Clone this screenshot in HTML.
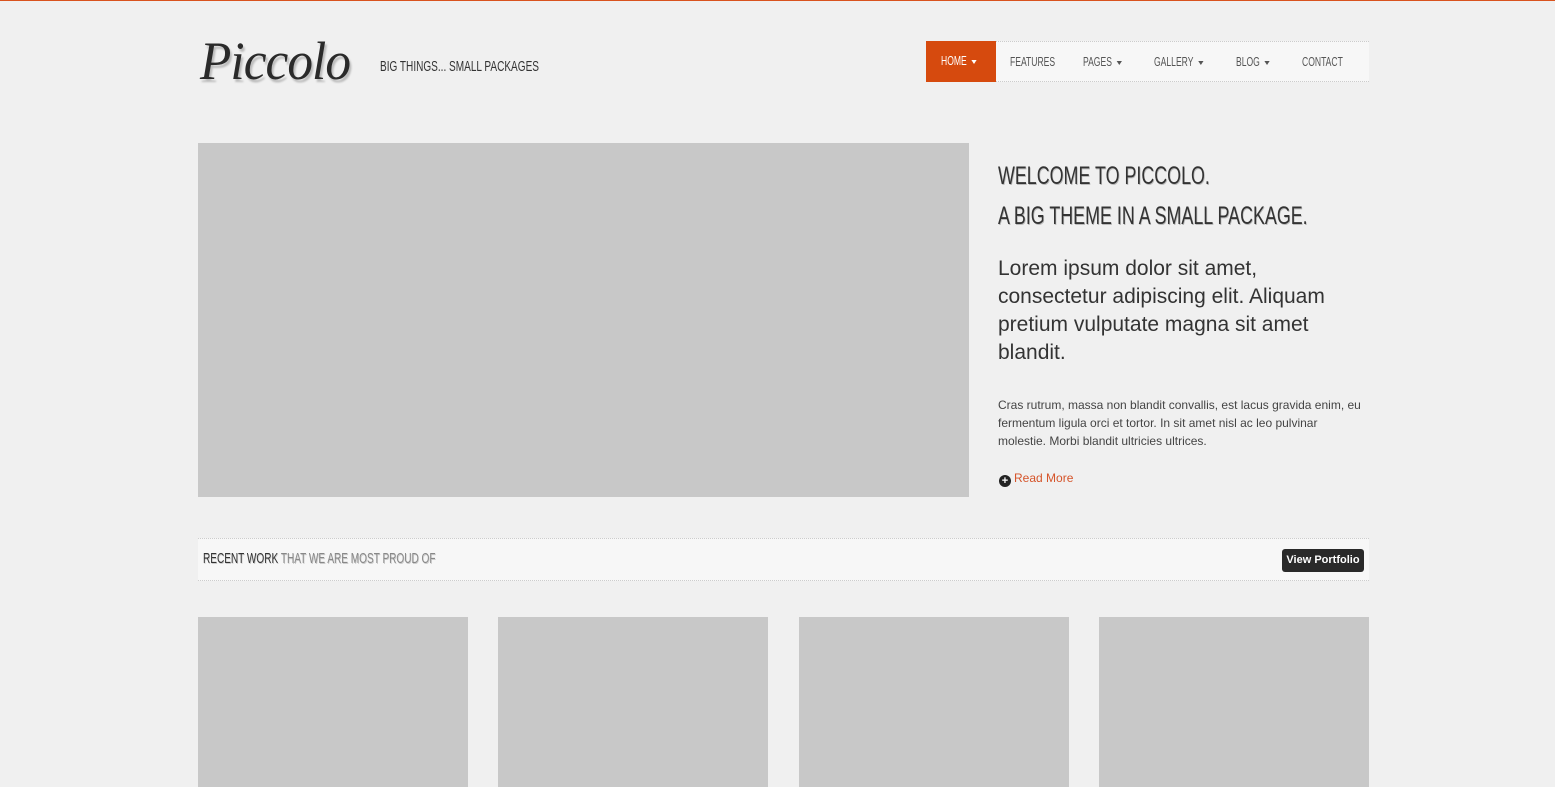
<!DOCTYPE html>
<html><head><meta charset="utf-8"><style>
body{margin:0;width:1555px;height:781px;overflow:hidden;background:#f0f0f0;font-family:"Liberation Sans",sans-serif;position:relative}
.n{font-family:"Liberation Sans Narrow","Liberation Sans",sans-serif;}
.abs{position:absolute}
.logo{left:200px;top:30px;font-family:"Liberation Serif",serif;font-style:italic;font-size:54px;color:#2a2a2a;text-shadow:2px 3px 2px #bbb;letter-spacing:-1px;transform:scaleX(.95);transform-origin:left}
.tag{left:380px;top:58px;font-size:15px;color:#333;transform:scaleX(.67);transform-origin:left;white-space:nowrap}
.nav{left:926px;top:41px;width:443px;height:41px;background:#f7f7f7;border-top:1px dotted #ccc;border-bottom:1px dotted #ccc;box-sizing:border-box}
.nav span{position:absolute;top:12px;font-size:13px;color:#555;transform:scaleX(.66);transform-origin:left;white-space:nowrap}
.home{left:926px;top:41px;width:70px;height:41px;background:#d64a0e}
.car{display:inline-block;border-left:4px solid transparent;border-right:4px solid transparent;border-top:4px solid currentColor;vertical-align:middle;margin-left:7px}
.g{background:#c8c8c8}
h2{margin:0;font-weight:normal;font-size:25px;color:#333;text-shadow:1px 1px 0 #bbb;transform:scaleX(.715);transform-origin:left;white-space:nowrap;position:absolute;left:998px}
.bar{left:198px;top:538px;width:1171px;height:43px;background:#f7f7f7;border-top:1px dotted #ccc;border-bottom:1px dotted #ccc;box-sizing:border-box}
</style></head><body>
<div class="abs" style="left:0;top:0;width:1555px;height:1px;background:#d9531e"></div>
<div class="abs logo">Piccolo</div>
<div class="abs tag n">BIG THINGS... SMALL PACKAGES</div>
<div class="abs nav">
<span class="n" style="left:84px">FEATURES</span>
<span class="n" style="left:157px">PAGES<i class="car"></i></span>
<span class="n" style="left:228px">GALLERY<i class="car"></i></span>
<span class="n" style="left:310px">BLOG<i class="car"></i></span>
<span class="n" style="left:376px">CONTACT</span>
</div>
<div class="abs home"><span class="n" style="position:absolute;left:15px;top:12px;font-size:13px;color:#fff;transform:scaleX(.66);transform-origin:left;white-space:nowrap">HOME<i class="car"></i></span></div>
<div class="abs g" style="left:198px;top:143px;width:771px;height:354px"></div>
<h2 class="n" style="top:162px">WELCOME TO PICCOLO.</h2>
<h2 class="n" style="top:202px">A BIG THEME IN A SMALL PACKAGE.</h2>
<div class="abs" style="left:998px;top:255px;width:360px;font-size:21px;line-height:28px;color:#333">Lorem ipsum dolor sit amet, consectetur adipiscing elit. Aliquam pretium vulputate magna sit amet blandit.</div>
<div class="abs" style="left:998px;top:396px;width:370px;font-size:12px;line-height:18px;color:#444">Cras rutrum, massa non blandit convallis, est lacus gravida enim, eu fermentum ligula orci et tortor. In sit amet nisl ac leo pulvinar molestie. Morbi blandit ultricies ultrices.</div>
<div class="abs" style="left:999px;top:471px;font-size:12px;color:#d5542a"><span style="display:inline-block;width:12px;height:12px;border-radius:50%;background:#222;color:#fff;font-size:11px;line-height:12px;text-align:center;font-weight:bold;vertical-align:-2px;margin-right:3px">+</span>Read More</div>
<div class="abs bar">
<span class="n" style="position:absolute;left:5px;top:11px;font-size:15px;color:#333;transform:scaleX(.67);transform-origin:left;white-space:nowrap;text-shadow:1px 1px 0 #ccc">RECENT WORK <span style="color:#888">THAT WE ARE MOST PROUD OF</span></span>
<div style="position:absolute;right:5px;top:10px;width:82px;height:23px;background:#2a2a2a;border-radius:3px;color:#fff;font-size:11px;font-weight:bold;line-height:23px;text-align:center">View Portfolio</div>
</div>
<div class="abs g" style="left:198px;top:617px;width:270px;height:170px"></div>
<div class="abs g" style="left:498px;top:617px;width:270px;height:170px"></div>
<div class="abs g" style="left:799px;top:617px;width:270px;height:170px"></div>
<div class="abs g" style="left:1099px;top:617px;width:270px;height:170px"></div>
</body></html>
